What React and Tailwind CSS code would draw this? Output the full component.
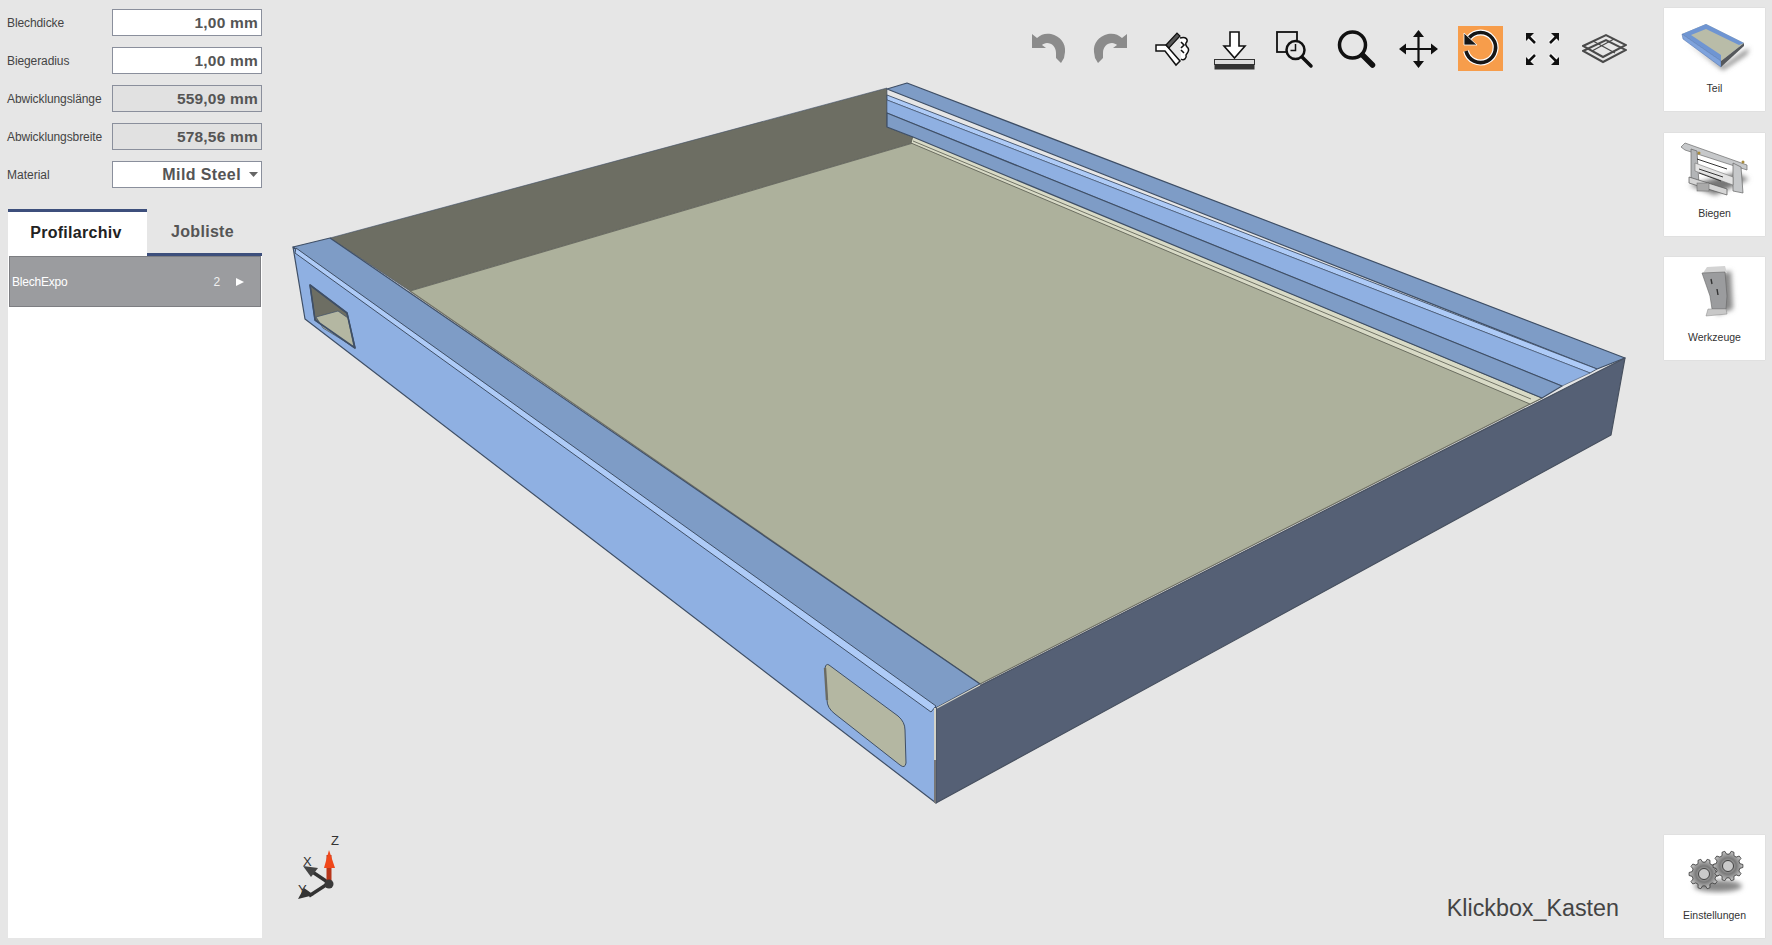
const fields = [
  { label: 'Blechdicke', value: '1,00 mm', readOnly: false },
  { label: 'Biegeradius', value: '1,00 mm', readOnly: false },
  { label: 'Abwicklungslänge', value: '559,09 mm', readOnly: true },
  { label: 'Abwicklungsbreite', value: '578,56 mm', readOnly: true },
];

const font = 'font-["Liberation_Sans",Arial,sans-serif]';

function ToolIcon({ children, active = false }) {
  return (
    <div className={`w-[62px] h-[45px] flex justify-center`}>
      <div className={`w-[45px] h-[45px] ${active ? 'bg-[#f79d4b]' : ''}`}>
        <svg width="45" height="45" viewBox="0 0 45 45">{children}</svg>
      </div>
    </div>
  );
}

const undoPath = 'M6 8 L11 12 C15 8 20 7 25 8 C34 10 40 17 39 26 L38 32 L35 37 L30 32 L30 27 C30 21 26 17 21 17 C19 17 17 18 16 19 L20 22 L6 22 Z';

function Toolbar() {
  return (
    <div className="absolute top-[26px] right-[15px] flex">
      <ToolIcon><path d={undoPath} fill="#8b8b8b" transform="translate(2 0)" /></ToolIcon>
      <ToolIcon><path d={undoPath} fill="#8b8b8b" transform="translate(47 0) scale(-1 1)" /></ToolIcon>
      <ToolIcon>
        <path d="M8 19 H18 L32 35 L28 39 L17 25 H8 Z" fill="#fff" stroke="#111" strokeWidth="1.5" />
        <path d="M18 19 L29 7 L32 10 L21 22 Z" fill="#555" stroke="#111" strokeWidth="1.2" />
        <path d="M32 12 C38 10 41 14 38 17 C37 19 38 20 40 22 C42 25 39 27 38 29 C39 32 36 35 33 33" fill="#fff" stroke="#111" strokeWidth="1.5" />
        <path d="M33 16 L36 19 L33 22 M33 24 L36 27" fill="none" stroke="#111" strokeWidth="1.6" />
      </ToolIcon>
      <ToolIcon>
        <path d="M20 6 H29 V20 H35 L24.5 32 L14 20 H20 Z" fill="#fff" stroke="#111" strokeWidth="1.6" />
        <rect x="4.5" y="33.5" width="40" height="5" fill="#ddd" stroke="#333" strokeWidth="1" />
        <rect x="4.5" y="38.5" width="40" height="5" fill="#333" />
      </ToolIcon>
      <ToolIcon>
        <rect x="5" y="6" width="20" height="20" fill="none" stroke="#111" strokeWidth="1.8" />
        <circle cx="23.5" cy="24" r="9" fill="#e6e6e6" stroke="#111" strokeWidth="2.5" />
        <path d="M23.5 18 V24.5 H18.5" fill="none" stroke="#111" strokeWidth="1.5" />
        <path d="M30 31 L39 40" stroke="#111" strokeWidth="3.5" strokeLinecap="round" />
      </ToolIcon>
      <ToolIcon>
        <circle cx="18.5" cy="19" r="13" fill="none" stroke="#111" strokeWidth="3.5" />
        <path d="M28.5 29 L38.5 39" stroke="#111" strokeWidth="5.5" strokeLinecap="round" />
      </ToolIcon>
      <ToolIcon>
        <path d="M22.5 7 V39 M5 23 H40" stroke="#111" strokeWidth="2.2" />
        <path d="M22.5 4 L28 11 H17 Z M22.5 42 L28 35 H17 Z M3 23 L10 17.5 V28.5 Z M42 23 L35 17.5 V28.5 Z" fill="#111" />
      </ToolIcon>
      <ToolIcon active>
        <path d="M11 12 A15 15 0 1 1 8 25" fill="none" stroke="#fff" strokeWidth="6" />
        <path d="M11 12 A15 15 0 1 1 8 25" fill="none" stroke="#161616" strokeWidth="3.6" />
        <path d="M6 7 V19 H19 Z" fill="#161616" stroke="#fff" strokeWidth="0.8" />
      </ToolIcon>
      <ToolIcon>
        <g stroke="#fff" strokeWidth="5" fill="none">
          <path d="M7 9 L15 17 M38 9 L30 17 M7 37 L15 29 M38 37 L30 29" />
        </g>
        <g stroke="#111" strokeWidth="2.6" fill="none">
          <path d="M8 10 L15 17 M37 10 L30 17 M8 36 L15 29 M37 36 L30 29" />
        </g>
        <path d="M6 7 H14 L6 15 Z M39 7 H31 L39 15 Z M6 39 H14 L6 31 Z M39 39 H31 L39 31 Z" fill="#111" />
      </ToolIcon>
      <ToolIcon>
        <g fill="none" stroke="#4a4a4a" strokeWidth="2">
          <path d="M1 20 L24 9 L44 19 L21 31 Z" />
          <path d="M1 25 L24 14 L44 24 L21 36 Z" />
          <path d="M11 15 L33 27 M32 13 L10 25" strokeWidth="1.2" />
        </g>
      </ToolIcon>
    </div>
  );
}

function Model() {
  return (
    <svg className="absolute inset-0" width="1380" height="945" viewBox="270 0 1380 945">
      <g stroke="#3f4f66" strokeWidth="1.2" strokeLinejoin="round">
        {/* back wall + floor */}
        <polygon points="330,238 887,88 887,127 913,137 913,143 410,291" fill="#6d6e63" strokeWidth="0.6" />
        <polygon points="410,291 913,143 1542,398 980,684" fill="#adb19c" stroke="#6d6e63" />
        <polygon points="913,136 1542,398 1530,404 911,143" fill="#d8dac6" stroke="#55584c" strokeWidth="0.8" />
        <path d="M913 141 L1531 399" stroke="#55584c" strokeWidth="0.8" fill="none" />
        {/* back flange */}
        <polygon points="887,89 907,83 1625,358 1597,369" fill="#7e9cc6" />
        <polygon points="887,95 1597,369 1590,373 887,100" fill="#aecbf7" stroke="#3f4f66" strokeWidth="0.9" />
        <polygon points="887,100 1590,373 1562,386 887,113" fill="#8fb0e2" strokeWidth="0.6" />
        <polygon points="887,113 1562,386 1542,398 913,137 887,127" fill="#7e9cc6" />
        {/* left outer face */}
        <polygon points="293,247 936,708 936,803 305,319" fill="#8fb0e2" />
        {/* left flange */}
        <polygon points="293,247 330,238 980,684 936,708" fill="#7e9cc6" />
        <polygon points="296,248 936,706 931,712 295,253" fill="#aecbf7" strokeWidth="1" />
        {/* right outer face */}
        <polygon points="936,708 1625,358 1611,435 936,803" fill="#556075" stroke="#47505f" />
        <path d="M937 708 L980 685" stroke="#d5d5cc" strokeWidth="1.2" fill="none" />
        <path d="M935 708 V800" stroke="#d3d3c8" strokeWidth="2" fill="none" />
        <path d="M935 760 V803" stroke="#777" strokeWidth="2" fill="none" />
        {/* window left */}
        <polygon points="310,285 347,313 355,348 315,320" fill="#6d6e63" />
        <polygon points="316,317 338,311 348,318 354,347 323,328" fill="#b4b7a2" strokeWidth="0.7" />
        <path d="M310 285 L347 313 L355 348 L315 320 Z" fill="none" strokeWidth="1.6" />
        {/* window right */}
        <path d="M829 665 L898 716 Q905 722 905 730 L906 763 Q905 769 900 765 L835 714 Q827 708 827 700 L825 668 Q826 663 829 665 Z" fill="#b4b7a2" strokeWidth="1" />
        <path d="M825 668 L827 700" stroke="#6b6b62" strokeWidth="2.4" fill="none" />
      </g>
    </svg>
  );
}

function Triad() {
  return (
    <div className={`absolute left-[23px] top-[830px] ${font}`}>
      <svg width="60" height="75" viewBox="0 0 60 75">
        <path d="M36 53 L15 39 M36 53 L16 66" stroke="#333" strokeWidth="3.4" />
        <path d="M10 36 L25 38 L18 47 Z" fill="#444" />
        <path d="M5 69 L11 58 L21 65 Z" fill="#333" />
        <path d="M36 25 V52" stroke="#b9361a" strokeWidth="5" />
        <path d="M36 20 L42 38 H31 Z" fill="#f0471a" />
        <circle cx="36" cy="54" r="4.5" fill="#3a3a3a" />
      </svg>
      <span className="absolute left-[38px] top-[4px] text-[13px] leading-none text-[#333]">Z</span>
      <span className="absolute left-[10px] top-[25px] text-[13px] leading-none text-[#333]">X</span>
      <span className="absolute left-[5px] top-[53px] text-[13px] leading-none text-[#333]">Y</span>
    </div>
  );
}

function TeilThumb() {
  return (
    <svg width="100" height="68" viewBox="0 0 100 68">
      <defs>
        <filter id="soft" x="-30%" y="-30%" width="160%" height="160%"><feGaussianBlur stdDeviation="2.5" /></filter>
      </defs>
      <polygon points="22,32 58,56 84,38 82,44 58,60" fill="#777" filter="url(#soft)" />
      <polygon points="17,24 41,14 79,33 56,51" fill="#b9bca8" />
      <polygon points="17,24 41,14 79,33 74,35 41,19 26,25 56,45 56,51" fill="#6f95d2" />
      <polygon points="17,24 56,51 56,57 18,29" fill="#7fa3dc" stroke="#4a6da8" strokeWidth="0.5" />
      <polygon points="56,51 79,33 79,36 56,57" fill="#55585c" />
    </svg>
  );
}

function BiegenThumb() {
  return (
    <svg width="100" height="68" viewBox="0 0 100 68">
      <polygon points="24,50 50,60 84,44 70,38" fill="#777" filter="url(#soft)" />
      <polygon points="16,12 20,8 82,30 82,35 20,15" fill="#c6c8ca" stroke="#6b6b6b" strokeWidth="0.7" />
      <polygon points="26,14 32,16 34,50 26,47" fill="#b3b5b7" stroke="#666" strokeWidth="0.7" />
      <polygon points="68,28 76,32 78,58 68,56" fill="#c6c8ca" stroke="#666" strokeWidth="0.7" />
      <polygon points="30,28 68,42 68,50 30,36" fill="#e3e3e3" stroke="#777" strokeWidth="0.6" />
      <polygon points="24,42 62,54 62,60 24,48" fill="#d5d5d5" stroke="#555" strokeWidth="0.7" />
      <path d="M34 34 L58 42 M34 38 L56 46 M32 24 L62 34" stroke="#333" strokeWidth="1" />
      <rect x="32" y="48" width="12" height="8" fill="#aaa" stroke="#666" strokeWidth="0.5" />
      <circle cx="34" cy="18" r="1.5" fill="#a88b3c" />
      <circle cx="78" cy="27" r="1.5" fill="#a88b3c" />
    </svg>
  );
}

function WerkzeugThumb() {
  return (
    <svg width="100" height="68" viewBox="0 0 100 68">
      <polygon points="48,16 66,12 68,50 52,56" fill="#888" filter="url(#soft)" />
      <polygon points="38,14 42,8 60,7 62,14" fill="#d3d3d3" />
      <polygon points="37,14 60,13 62,37 61,50 47,50 45,37" fill="#9b9c9e" stroke="#666" strokeWidth="0.6" />
      <polygon points="43,50 61,50 62,55 41,57" fill="#c8c8c8" stroke="#888" strokeWidth="0.5" />
      <path d="M46 20 L47 25 M52 30 L53 36" stroke="#333" strokeWidth="1.4" />
    </svg>
  );
}

function gearPath(cx, cy, outer, inner, teeth) {
  let d = '';
  const step = (Math.PI * 2) / teeth;
  for (let i = 0; i < teeth; i++) {
    const a = i * step;
    const pts = [
      [inner, a - step * 0.32],
      [outer, a - step * 0.16],
      [outer, a + step * 0.16],
      [inner, a + step * 0.32],
    ];
    pts.forEach(([r, t], j) => {
      d += `${i === 0 && j === 0 ? 'M' : 'L'}${(cx + r * Math.cos(t)).toFixed(1)} ${(cy + r * Math.sin(t)).toFixed(1)} `;
    });
  }
  return d + 'Z';
}

function GearThumb() {
  return (
    <svg width="100" height="68" viewBox="0 0 100 68">
      <defs>
        <radialGradient id="gearFill">
          <stop offset="0%" stopColor="#d8d8d8" />
          <stop offset="55%" stopColor="#7a7a7a" />
          <stop offset="100%" stopColor="#c4c4c4" />
        </radialGradient>
      </defs>
      <ellipse cx="53" cy="49" rx="24" ry="6" fill="#888" filter="url(#soft)" />
      <path d={gearPath(39, 37, 15, 12, 10)} fill="url(#gearFill)" stroke="#333" strokeWidth="0.8" />
      <circle cx="39" cy="37" r="5.5" fill="#c9c9c9" stroke="#333" strokeWidth="0.9" />
      <path d={gearPath(63, 29, 15, 12, 10)} fill="url(#gearFill)" stroke="#333" strokeWidth="0.8" />
      <circle cx="63" cy="29" r="5.5" fill="#c9c9c9" stroke="#333" strokeWidth="0.9" />
    </svg>
  );
}

function NavCard({ label, children }) {
  return (
    <div className="w-[101px] h-[103px] bg-white flex flex-col items-center pt-[2px] shadow-[0_0_1px_rgba(0,0,0,0.15)]">
      {children}
      <span className="mt-[4px] text-[10.5px] leading-[13px] text-[#333]">{label}</span>
    </div>
  );
}

export default function App() {
  return (
    <div className={`flex w-[1772px] h-[945px] overflow-hidden bg-[#e6e6e6] ${font}`}>
      {/* left panel */}
      <aside className="w-[270px] pl-[8px] pr-[8px] pt-[9px] pb-[7px] flex flex-col">
        <div className="flex flex-col gap-[11px]">
          {fields.map((f) => (
            <div key={f.label} className="flex items-center h-[27px] -ml-[1px]">
              <span className="w-[105px] text-[12px] tracking-[-0.1px] text-[#444] whitespace-nowrap">{f.label}</span>
              <div className={`w-[150px] h-[27px] border border-[#8a8f9c] flex items-center justify-end pr-[3px] text-[15.5px] tracking-[0.2px] font-bold text-[#555] ${f.readOnly ? 'bg-[#e1e1e1]' : 'bg-white'}`}>
                {f.value}
              </div>
            </div>
          ))}
          <div className="flex items-center h-[27px] -ml-[1px]">
            <span className="w-[105px] text-[12px] text-[#444]">Material</span>
            <div className="w-[150px] h-[27px] border border-[#8a8f9c] bg-white flex items-center justify-end pr-[3px] text-[16px] tracking-[0.4px] font-bold text-[#555]">
              Mild Steel
              <svg className="ml-[8px]" width="9" height="5" viewBox="0 0 9 5"><path d="M0 0 H9 L4.5 5 Z" fill="#666" /></svg>
            </div>
          </div>
        </div>

        <div className="mt-[21px] flex h-[47px]">
          <div className="w-[139px] bg-white border-t-[3px] border-[#3d4f7c] flex items-center justify-center text-[16px] tracking-[0.3px] font-bold text-[#222] pb-[2px] pr-[3px]">
            Profilarchiv
          </div>
          <div className="flex-1 border-b-[3px] border-[#3d4f7c] flex items-center justify-center text-[16px] tracking-[0.3px] font-bold text-[#555] pr-[4px] pt-[1px]">
            Jobliste
          </div>
        </div>
        <div className="flex-1 bg-white px-[1px]">
          <div className="h-[51px] bg-[#9b9c9f] border border-[#7d7e82] flex items-center text-[12px] tracking-[-0.2px] text-white pl-[2px]">
            <span className="flex-1">BlechExpo</span>
            <span className="text-[#f0f0f0]">2</span>
            <svg className="ml-[16px] mr-[16px]" width="8" height="8" viewBox="0 0 8 8"><path d="M0 0 L8 4 L0 8 Z" fill="#fff" /></svg>
          </div>
        </div>
      </aside>

      {/* canvas */}
      <main className="relative flex-1">
        <Model />
        <Toolbar />
        <Triad />
        <span className="absolute right-[31px] top-[891px] text-[23.3px] leading-[34px] text-[#444]">Klickbox_Kasten</span>
      </main>

      {/* right column */}
      <aside className="w-[122px] pl-[14px] pt-[8px] pb-[7px] flex flex-col">
        <div className="flex flex-col gap-[21.5px]">
          <NavCard label="Teil"><TeilThumb /></NavCard>
          <NavCard label="Biegen"><BiegenThumb /></NavCard>
          <NavCard label="Werkzeuge"><WerkzeugThumb /></NavCard>
        </div>
        <div className="mt-auto">
          <NavCard label="Einstellungen"><GearThumb /></NavCard>
        </div>
      </aside>
    </div>
  );
}
